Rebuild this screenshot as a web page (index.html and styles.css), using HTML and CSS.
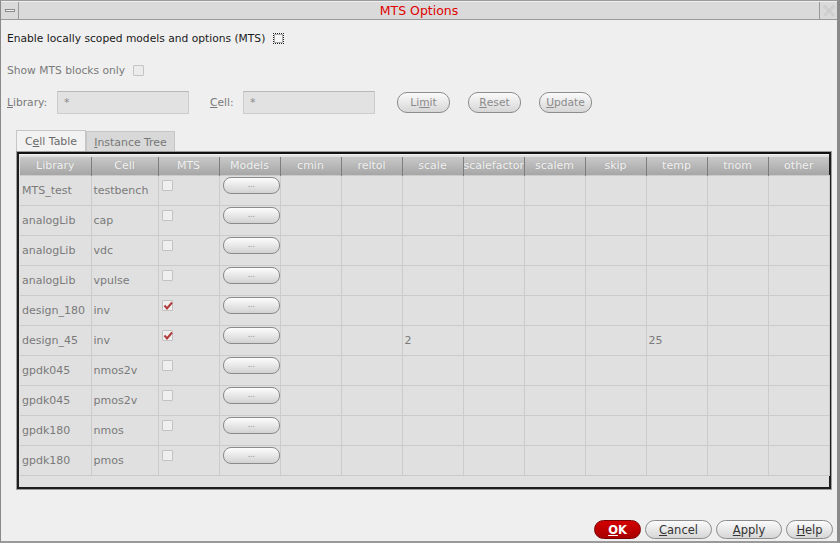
FILE: index.html
```html
<!DOCTYPE html>
<html>
<head>
<meta charset="utf-8">
<link rel="stylesheet" href="styles.css">
</head>
<body>
<div class="window">
  <div class="titlebar">
    <div class="tb-btn tb-min"><span class="min-bar"></span></div>
    <div class="tb-title">MTS Options</div>
    <div class="tb-btn tb-close">
      <svg width="12" height="12" viewBox="0 0 12 12"><path d="M1 1 L11 11 M11 1 L1 11" stroke="#c8c8c8" stroke-width="3" stroke-dasharray="1.2 0.8" fill="none"/></svg>
    </div>
  </div>
  <div class="content">
    <div class="row-enable">
      <span>Enable locally scoped models and options (MTS)</span>
      <span class="cb cb-focus"></span>
    </div>
    <div class="row-show">
      <span>Show MTS blocks only</span>
      <span class="cb cb-dis"></span>
    </div>
    <div class="row-filter">
      <label class="lbl lbl-lib"><u>L</u>ibrary:</label>
      <div class="input">*</div>
      <label class="lbl lbl-cell"><u>C</u>ell:</label>
      <div class="input">*</div>
      <div class="btns">
        <span class="pill pill-sm">Li<u>m</u>it</span>
        <span class="pill pill-sm"><u>R</u>eset</span>
        <span class="pill pill-sm"><u>U</u>pdate</span>
      </div>
    </div>
    <div class="tabs">
      <span class="tab tab-active">C<u>e</u>ll Table</span>
      <span class="tab tab-inactive"><u>I</u>nstance Tree</span>
    </div>
    <div class="frame">
      <table class="grid">
        <colgroup>
          <col class="c-lib"><col class="c-cell"><col class="c-std"><col class="c-std"><col class="c-std"><col class="c-std"><col class="c-std"><col class="c-std"><col class="c-std"><col class="c-std"><col class="c-std"><col class="c-std"><col class="c-std">
        </colgroup>
        <thead>
          <tr><th>Library</th><th>Cell</th><th>MTS</th><th>Models</th><th>cmin</th><th>reltol</th><th>scale</th><th>scalefactor</th><th>scalem</th><th>skip</th><th>temp</th><th>tnom</th><th>other</th></tr>
        </thead>
        <tbody>
          <tr><td>MTS_test</td><td>testbench</td><td><span class="tcb"></span></td><td><span class="mbtn">...</span></td><td></td><td></td><td></td><td></td><td></td><td></td><td></td><td></td><td></td></tr>
          <tr><td>analogLib</td><td>cap</td><td><span class="tcb"></span></td><td><span class="mbtn">...</span></td><td></td><td></td><td></td><td></td><td></td><td></td><td></td><td></td><td></td></tr>
          <tr><td>analogLib</td><td>vdc</td><td><span class="tcb"></span></td><td><span class="mbtn">...</span></td><td></td><td></td><td></td><td></td><td></td><td></td><td></td><td></td><td></td></tr>
          <tr><td>analogLib</td><td>vpulse</td><td><span class="tcb"></span></td><td><span class="mbtn">...</span></td><td></td><td></td><td></td><td></td><td></td><td></td><td></td><td></td><td></td></tr>
          <tr><td>design_180</td><td>inv</td><td><span class="tcb"><svg width="10" height="10" viewBox="0 0 10 10"><path d="M1.5 4.5 L4 7.5 L9 1.5" stroke="#b33a3a" stroke-width="2" fill="none"/></svg></span></td><td><span class="mbtn">...</span></td><td></td><td></td><td></td><td></td><td></td><td></td><td></td><td></td><td></td></tr>
          <tr><td>design_45</td><td>inv</td><td><span class="tcb"><svg width="10" height="10" viewBox="0 0 10 10"><path d="M1.5 4.5 L4 7.5 L9 1.5" stroke="#b33a3a" stroke-width="2" fill="none"/></svg></span></td><td><span class="mbtn">...</span></td><td></td><td></td><td>2</td><td></td><td></td><td></td><td>25</td><td></td><td></td></tr>
          <tr><td>gpdk045</td><td>nmos2v</td><td><span class="tcb"></span></td><td><span class="mbtn">...</span></td><td></td><td></td><td></td><td></td><td></td><td></td><td></td><td></td><td></td></tr>
          <tr><td>gpdk045</td><td>pmos2v</td><td><span class="tcb"></span></td><td><span class="mbtn">...</span></td><td></td><td></td><td></td><td></td><td></td><td></td><td></td><td></td><td></td></tr>
          <tr><td>gpdk180</td><td>nmos</td><td><span class="tcb"></span></td><td><span class="mbtn">...</span></td><td></td><td></td><td></td><td></td><td></td><td></td><td></td><td></td><td></td></tr>
          <tr><td>gpdk180</td><td>pmos</td><td><span class="tcb"></span></td><td><span class="mbtn">...</span></td><td></td><td></td><td></td><td></td><td></td><td></td><td></td><td></td><td></td></tr>
        </tbody>
      </table>
    </div>
    <div class="footer">
      <span class="pill pill-ok"><u>O</u>K</span>
      <span class="pill pill-ft pill-cancel"><u>C</u>ancel</span>
      <span class="pill pill-ft pill-apply"><u>A</u>pply</span>
      <span class="pill pill-ft pill-help"><u>H</u>elp</span>
    </div>
  </div>
</div>
</body>
</html>
```
FILE: styles.css
```css
* { box-sizing: border-box; }
html, body { margin: 0; padding: 0; }
body {
  width: 840px; height: 543px; overflow: hidden;
  font-family: "DejaVu Sans", sans-serif;
  font-size: 11px;
  background: #efefef;
}
.window {
  width: 840px; height: 543px;
  border-left: 1px solid #8a8a8a;
  border-right: 3px solid #8a8a8a;
  border-top: 1px solid #9a9a9a;
  border-bottom: 2px solid #9a9a9a;
  display: flex; flex-direction: column;
  background: #efefef;
}
.titlebar {
  height: 18px;
  display: flex;
  background: #dadada;
  border-bottom: 1px solid #9a9a9a;
  margin-top: 1px;
}
.tb-btn {
  width: 18px; height: 17px;
  display: flex; align-items: center; justify-content: center;
  background: #dadada;
}
.tb-min { border-right: 1px solid #9a9a9a; margin-left: 1px; width: 17px; }
.min-bar { width: 10px; height: 3px; border: 1px solid #8a8a8a; background: #f4f4f4; }
.tb-close { border-left: 1px solid #9a9a9a; }
.tb-title {
  flex: 1; text-align: center; color: #e00000;
  font-size: 12.5px; line-height: 17px;
}
.content { flex: 1; display: flex; flex-direction: column; padding: 0 0 0 6px; }
.row-enable {
  display: flex; align-items: center; gap: 8px;
  height: 20px; margin-top: 8px;
  color: #1a1a1a; font-size: 10.7px;
}
.cb { display: inline-block; width: 11px; height: 11px; }
.cb-focus { border: 1px dotted #222; background: #f6f6f6; box-shadow: inset 0 0 0 1px #aaa; }
.row-show {
  display: flex; align-items: center; gap: 8px;
  height: 20px; margin-top: 12px;
  color: #7a7a7a; font-size: 10.7px;
}
.cb-dis { border: 1px solid #c4c4c4; background: #ececec; border-radius: 1px; }
.row-filter {
  display: flex; align-items: center;
  height: 24px; margin-top: 10px;
  color: #7a7a7a; font-size: 10.7px;
}
.lbl-lib { width: 50px; }
.lbl-cell { width: 33px; margin-left: 21px; }
.input {
  width: 132px; height: 23px;
  background: #e2e2e2;
  border: 1px solid #cdcdcd; border-top-color: #b8b8b8;
  color: #8a8a8a; padding: 4px 0 0 6px; font-size: 11px;
}
.btns { display: flex; gap: 18px; margin-left: 22px; }
.pill {
  display: inline-flex; align-items: center; justify-content: center;
  border-radius: 10px;
  border: 1px solid #8c8c8c;
  background: linear-gradient(#fbfbfb, #d6d6d6);
  color: #8a8a8a;
}
.pill-sm { width: 53px; height: 21px; font-size: 10.7px; }
.tabs { display: flex; margin-top: 16px; margin-left: 9px; height: 22px; align-items: flex-end; }
.tab {
  display: inline-flex; align-items: center; justify-content: center;
  height: 22px; border: 1px solid #c6c6c6; border-bottom: none;
  color: #6a6a6a; font-size: 10.9px;
}
.tab-active { width: 70px; background: #f2f2f2; }
.tab-inactive { width: 89px; height: 21px; background: #d8d8d8; color: #777; }
.frame {
  width: 814px; height: 337px;
  margin-left: 10px;
  border: 2px solid #1e1e1e;
  outline: 1px solid #9c9c9c;
  background: #e0e0e0;
  padding-top: 3px;
  border-top-color: #111;
  box-shadow: inset 0 1px 0 #f4f4f4;
}
.grid {
  border-collapse: collapse;
  table-layout: fixed;
  width: 809px;
  margin-left: 1px;
}
.c-lib { width: 71px; }
.c-cell { width: 67px; }
.c-std { width: 61px; }
.grid th {
  height: 18px; padding: 0;
  background: linear-gradient(#c8c8c8, #a6a6a6);
  color: #f2f2f2; font-weight: normal; font-size: 11px;
  border-left: 1px solid #7e7e7e;
  text-shadow: 0 0 1px #a0a0a0;
  white-space: nowrap; overflow: hidden;
}
.grid th:first-child { border-left: none; }
.grid td {
  height: 30px; padding: 0 0 0 2px;
  border: 1px solid #cbcbcb;
  color: #7a7a7a; font-size: 11px;
  background: #e0e0e0;
  white-space: nowrap; overflow: hidden;
  vertical-align: middle;
}
.grid td:first-child { border-left: none; }
.grid td:nth-child(3), .grid td:nth-child(4) { vertical-align: top; padding-top: 1px; }
.tcb {
  display: block; width: 11px; height: 11px; margin: 3px 0 0 1px;
  border: 1px solid #c2c2c2; background: #efefef; border-radius: 1px;
}
.tcb svg { display: block; }
.mbtn {
  display: flex; align-items: center; justify-content: center;
  width: 57px; height: 17px; margin-left: 1px;
  border-radius: 8px; border: 1px solid #8a8a8a;
  background: linear-gradient(#fdfdfd, #d2d2d2);
  color: #9a9a9a; font-size: 9px; padding-bottom: 2px; letter-spacing: -0.5px;
}
.footer {
  display: flex; justify-content: flex-end; gap: 4px;
  margin-top: auto; margin-bottom: 2px; padding-right: 4px;
}
.pill-ok {
  width: 47px; height: 19px;
  background: linear-gradient(#d40000, #a80000);
  border-color: #7a0000; color: #fff; font-weight: bold; font-size: 11.5px;
}
.pill-ft { height: 19px; color: #333; font-size: 11.5px; }
.pill-cancel { width: 67px; }
.pill-apply { width: 66px; }
.pill-help { width: 47px; }
```
